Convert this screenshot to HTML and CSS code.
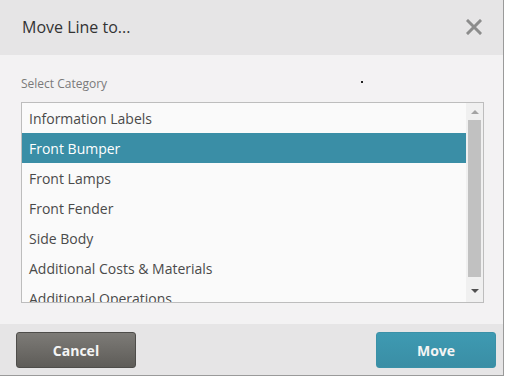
FILE: index.html
```html
<!DOCTYPE html>
<html>
<head>
<meta charset="utf-8">
<link rel="stylesheet" href="styles.css">
</head>
<body>
<div class="dialog">
  <div class="header">
    <span class="title">Move Line to...</span>
    <svg class="close" width="16" height="16" viewBox="0 0 16 16"><path d="M2 2 L14 14 M14 2 L2 14" stroke="#8c8c8c" stroke-width="3" stroke-linecap="square"/></svg>
  </div>
  <div class="body">
    <div class="label-row"><span class="label">Select Category</span><span class="dot"></span></div>
    <div class="listbox">
      <div class="items">
        <div class="item">Information Labels</div>
        <div class="item selected">Front Bumper</div>
        <div class="item">Front Lamps</div>
        <div class="item">Front Fender</div>
        <div class="item">Side Body</div>
        <div class="item">Additional Costs &amp; Materials</div>
        <div class="item">Additional Operations</div>
      </div>
      <div class="scrollbar">
        <div class="arrow up"></div>
        <div class="thumb"></div>
        <div class="arrow down"></div>
      </div>
    </div>
  </div>
  <div class="footer">
    <button class="btn cancel">Cancel</button>
    <button class="btn move">Move</button>
  </div>
</div>
</body>
</html>
```
FILE: styles.css
```css
html, body {
  margin: 0;
  padding: 0;
  background: #ffffff;
}
body {
  font-family: "Open Sans", "Noto Sans", sans-serif;
}
.dialog {
  width: 503px;
  height: 375px;
  border-right: 1px solid #9a9a9a;
  border-bottom: 1px solid #9a9a9a;
  display: flex;
  flex-direction: column;
  background: #f3f2f3;
}
.header {
  height: 55px;
  background: #e6e5e6;
  display: flex;
  align-items: center;
  justify-content: space-between;
  padding: 0 21px 0 22px;
}
.title {
  font-size: 16px;
  color: #333333;
  line-height: 55px;
}
.close {
  display: block;
  margin-top: -1px;
}
.body {
  flex: 1;
  padding: 21px 20px 0 21px;
}
.label-row {
  display: flex;
  align-items: flex-start;
  height: 16px;
  margin-bottom: 10px;
}
.label {
  font-size: 12px;
  line-height: 16px;
  color: #7a7a7a;
}
.dot {
  width: 2px;
  height: 2px;
  background: #222;
  margin-left: 254px;
  margin-top: 5px;
}
.listbox {
  width: 461px;
  height: 199px;
  border: 1px solid #bdbdbd;
  background: #fafafa;
  display: flex;
}
.items {
  flex: 1;
  overflow: hidden;
}
.item {
  height: 30px;
  line-height: 31px;
  font-size: 14px;
  color: #4a4a4a;
  padding-left: 7px;
  white-space: nowrap;
}
.item.selected {
  background: #3a8ea6;
  color: #ffffff;
}
.scrollbar {
  width: 17px;
  background: #f0f0f0;
  display: flex;
  flex-direction: column;
  align-items: center;
}
.arrow {
  width: 0;
  height: 0;
  border-left: 4px solid transparent;
  border-right: 4px solid transparent;
}
.arrow.up {
  border-bottom: 4px solid #a3a3a3;
  margin-top: 7px;
}
.thumb {
  width: 13px;
  height: 157px;
  background: #c1c1c1;
  margin-top: 6px;
}
.arrow.down {
  border-top: 4px solid #505050;
  margin-top: 12px;
}
.footer {
  height: 51px;
  background: #e6e5e6;
  display: flex;
  justify-content: space-between;
  align-items: flex-start;
  padding: 8px 7px 0 16px;
  box-sizing: border-box;
}
.btn {
  width: 120px;
  height: 36px;
  border-radius: 3px;
  font-family: "Open Sans", "Noto Sans", sans-serif;
  font-weight: bold;
  font-size: 14px;
  color: #f4f4f4;
  padding: 0;
  cursor: pointer;
}
.cancel {
  background: linear-gradient(#7d7b77, #5e5c58);
  border: 1px solid #4e4d4a;
}
.move {
  background: linear-gradient(#3e9ab2, #3a8ea5);
  border: 1px solid #3a91a8;
}
```
